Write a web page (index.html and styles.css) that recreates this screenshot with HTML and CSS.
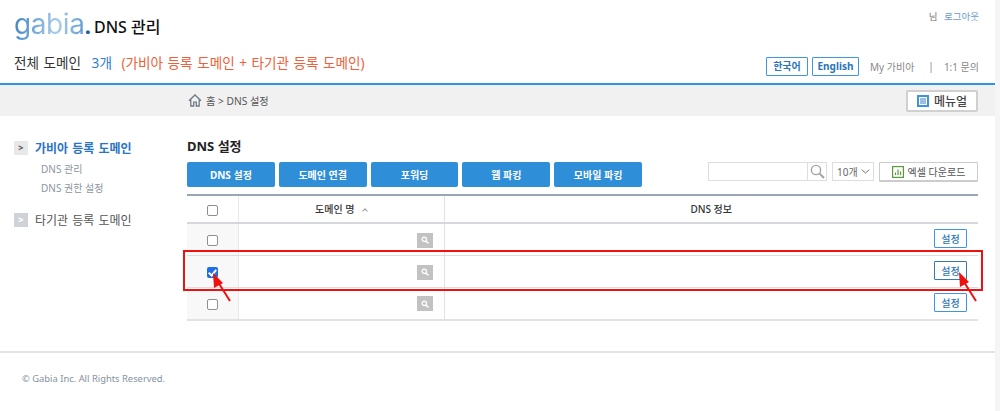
FILE: index.html
```html
<!DOCTYPE html>
<html lang="ko">

<head>
    <meta charset="UTF-8">
    <meta name="viewport" content="width=device-width, initial-scale=1.0">
    <title>DNS 관리</title>
    <link rel="stylesheet" href="styles.css">
</head>

<body>

    <div class="page">
        <header class="header">
            <div class="header-top">
                <div class="brand">
                    <span class="logo">gabia<b>.</b></span>
                    <span class="brand-title">DNS 관리</span>
                </div>
                <div class="user">님 <a href="#">로그아웃</a></div>
            </div>
            <div class="header-bottom">
                <div class="summary">
                    전체 도메인 <span class="count">3개</span>
                    <span class="note">(가비아 등록 도메인 + 타기관 등록 도메인)</span>
                </div>
                <nav class="links">
                    <a class="lang" href="#">한국어</a>
                    <a class="lang" href="#">English</a>
                    <a class="link-my" href="#">My 가비아</a>
                    <span class="link-sep">|</span>
                    <a class="link-ask" href="#">1:1 문의</a>
                </nav>
            </div>
        </header>

        <div class="crumb-bar">
            <div class="crumbs">
                <svg class="home-icon" width="14" height="13" viewBox="0 0 14 13">
                    <path d="M1 6.8 7 1l6 5.8M2.8 5.6V12h2.9V8.2h2.6V12h2.9V5.6" fill="none" stroke="#6f7b86" stroke-width="1.3"/>
                </svg>
                홈 &gt; DNS 설정
            </div>
            <a class="manual" href="#">
                <svg width="12" height="12" viewBox="0 0 12 12">
                    <rect width="12" height="12" fill="#3f94e0"/>
                    <rect x="2" y="2" width="8" height="8" fill="#fff"/>
                    <path d="M3 4h6M3 6h6M3 8h6" stroke="#3f7fc0" stroke-width="1"/>
                </svg>
                메뉴얼
            </a>
        </div>

        <div class="content">
            <aside class="sidebar">
                <div class="side-item active"><span class="arrow">&gt;</span>가비아 등록 도메인</div>
                <a class="side-sub" href="#">DNS 관리</a>
                <a class="side-sub" href="#">DNS 권한 설정</a>
                <div class="side-item other"><span class="arrow">&gt;</span>타기관 등록 도메인</div>
            </aside>

            <main class="main">
                <h1>DNS 설정</h1>
                <div class="toolbar">
                    <div class="tabs">
                        <button class="btn">DNS 설정</button>
                        <button class="btn">도메인 연결</button>
                        <button class="btn">포워딩</button>
                        <button class="btn">웹 파킹</button>
                        <button class="btn">모바일 파킹</button>
                    </div>
                    <div class="tools">
                        <div class="search">
                            <input type="text">
                            <span class="search-btn">
                                <svg width="15" height="15" viewBox="0 0 15 15">
                                    <circle cx="6" cy="6" r="4.6" fill="none" stroke="#a3a3a3" stroke-width="1.4"/>
                                    <path d="M9.4 9.4 14 14" stroke="#a3a3a3" stroke-width="2"/>
                                </svg>
                            </span>
                        </div>
                        <div class="page-size">10개
                            <svg width="9" height="5" viewBox="0 0 9 5">
                                <path d="M.7.7 4.5 4 8.3.7" fill="none" stroke="#777" stroke-width="1"/>
                            </svg>
                        </div>
                        <a class="excel" href="#">
                            <svg width="12" height="12" viewBox="0 0 12 12">
                                <rect x=".6" y=".6" width="10.8" height="10.8" fill="#fff" stroke="#5b9a3c" stroke-width="1.2"/>
                                <path d="M3.5 9V6.5M6 9V3.5M8.5 9V5.5" stroke="#5b9a3c" stroke-width="1.2"/>
                            </svg>
                            엑셀 다운로드
                        </a>
                    </div>
                </div>

                <table class="domains">
                    <thead>
                        <tr>
                            <th class="col-check"><input type="checkbox"></th>
                            <th class="col-name">도메인 명 <span class="sort"></span></th>
                            <th>DNS 정보</th>
                        </tr>
                    </thead>
                    <tbody>
                        <tr>
                            <td class="col-check"><input type="checkbox"></td>
                            <td class="col-name"><span class="zoom-btn"><svg width="8" height="8" viewBox="0 0 8 8"><circle cx="3.3" cy="3.3" r="2.2" fill="none" stroke="#fff" stroke-width="1.3"/><path d="M5 5 7.4 7.4" stroke="#fff" stroke-width="1.5"/></svg></span></td>
                            <td class="col-info"><button class="set-btn">설정</button></td>
                        </tr>
                        <tr>
                            <td class="col-check"><input type="checkbox" checked></td>
                            <td class="col-name"><span class="zoom-btn"><svg width="8" height="8" viewBox="0 0 8 8"><circle cx="3.3" cy="3.3" r="2.2" fill="none" stroke="#fff" stroke-width="1.3"/><path d="M5 5 7.4 7.4" stroke="#fff" stroke-width="1.5"/></svg></span></td>
                            <td class="col-info"><button class="set-btn focus">설정</button></td>
                        </tr>
                        <tr>
                            <td class="col-check"><input type="checkbox"></td>
                            <td class="col-name"><span class="zoom-btn"><svg width="8" height="8" viewBox="0 0 8 8"><circle cx="3.3" cy="3.3" r="2.2" fill="none" stroke="#fff" stroke-width="1.3"/><path d="M5 5 7.4 7.4" stroke="#fff" stroke-width="1.5"/></svg></span></td>
                            <td class="col-info"><button class="set-btn">설정</button></td>
                        </tr>
                    </tbody>
                </table>
            </main>
        </div>

        <footer class="footer">© Gabia Inc. All Rights Reserved.</footer>

        <!-- red marks drawn over the screenshot -->
        <svg class="marks" width="1000" height="411" viewBox="0 0 1000 411">
            <rect x="184" y="251" width="798" height="39" fill="none" stroke="#f01010" stroke-width="2"/>
            <path d="M230 301 218 282" stroke="#f01010" stroke-width="2"/>
            <path d="M213 273 223 283 214 288Z" fill="#f01010"/>
            <path d="M976 301 964 282" stroke="#f01010" stroke-width="2"/>
            <path d="M959 272 969 282 960 287Z" fill="#f01010"/>
        </svg>
    </div>

</body>

</html>
```

FILE: styles.css
```css
* {
    margin: 0;
    padding: 0;
    box-sizing: border-box;
}

html,
body {
    height: 411px;
    overflow: hidden;
}

body {
    font-family: "Noto Sans", "Noto Sans CJK KR", sans-serif;
    background-color: #f5f5f5;
    color: #444;
}

a {
    text-decoration: none;
    color: inherit;
}

.page {
    width: 995px;
    height: 411px;
    background-color: #fff;
}

.header {
    height: 85px;
    padding: 0 16px 0 14px;
    border-bottom: 2px solid #2f94e6;
}

.header-top {
    display: flex;
    justify-content: space-between;
    height: 52px;
}

.brand {
    display: flex;
    align-items: center;
    height: 43px;
    padding-top: 9px;
}

.logo {
    width: 80px;
    font-family: "Inter", sans-serif;
    font-size: 28px;
    font-weight: 400;
    letter-spacing: -0.4px;
    line-height: 36px;
    color: #5f9bd2;
    background: linear-gradient(100deg, #3f82c4, #a9cdea 55%, #3f86c8);
    -webkit-background-clip: text;
    background-clip: text;
    -webkit-text-fill-color: transparent;
}

.logo b {
    color: #1d5fa8;
    -webkit-text-fill-color: #1d5fa8;
    font-size: 18px;
    font-weight: 900;
}

.brand-title {
    font-size: 16px;
    font-weight: 500;
    color: #111;
}

.user {
    margin-top: 9px;
    font-size: 9.5px;
    color: #777;
}

.user a {
    margin-left: 4px;
    color: #6e9ccb;
}

.header-bottom {
    display: flex;
    justify-content: space-between;
    align-items: center;
    height: 24px;
}

.summary {
    padding-bottom: 4px;
    font-size: 13.6px;
    color: #333;
    word-spacing: 1px;
}

.count {
    margin: 0 5px 0 6px;
    color: #2f80d0;
}

.note {
    color: #f0603a;
}

.links {
    display: flex;
    align-items: center;
    padding-top: 4px;
    font-size: 10px;
    color: #888;
}

.lang {
    width: 42px;
    height: 19px;
    margin-right: 4px;
    border: 1.5px solid #3f96e4;
    border-radius: 1px;
    text-align: center;
    line-height: 16px;
    font-weight: 700;
    color: #2a74bc;
}

.lang + .lang {
    width: 47px;
}

.link-my {
    margin-left: 7px;
}

.link-sep {
    margin: 0 10px 0 14px;
}

.crumb-bar {
    display: flex;
    justify-content: space-between;
    align-items: center;
    height: 31px;
    padding: 0 17px 0 188px;
    background-color: #f1f1f1;
}

.crumbs {
    display: flex;
    align-items: center;
    gap: 4px;
    font-size: 10.2px;
    color: #555;
}

.manual {
    display: flex;
    align-items: center;
    justify-content: center;
    gap: 5px;
    width: 72px;
    height: 22px;
    background-color: #fff;
    border: 2px solid #d0d0d0;
    border-radius: 2px;
    font-size: 12px;
    font-weight: 500;
    color: #444;
}

.content {
    display: grid;
    grid-template-columns: 187px 791px;
    height: 235px;
}

.sidebar {
    padding: 24px 0 0 14px;
}

.side-item {
    display: flex;
    align-items: center;
    gap: 7px;
    height: 16px;
    font-size: 12px;
    word-spacing: 1px;
}

.side-item.active {
    color: #2a74c4;
    font-weight: 700;
}

.side-item.other {
    margin-top: 16px;
    color: #555;
}

.arrow {
    width: 14px;
    height: 14px;
    background-color: #e8e8e8;
    color: #666;
    text-align: center;
    font-size: 9px;
    font-weight: 900;
    line-height: 14px;
}

.other .arrow {
    background-color: #cfd3d8;
    color: #fff;
}

.side-sub {
    display: block;
    margin: 3px 0 0 27px;
    height: 16px;
    line-height: 16px;
    font-size: 10px;
    color: #8c96a0;
}

.side-item + .side-sub {
    margin-top: 5px;
}

.main h1 {
    height: 46px;
    padding-top: 21px;
    font-size: 13px;
    font-weight: 700;
    line-height: 18px;
    color: #222;
}

.toolbar {
    display: flex;
    justify-content: space-between;
    align-items: flex-start;
    height: 32px;
}

.tabs {
    display: flex;
    gap: 4px;
}

.btn {
    width: 87.8px;
    height: 25px;
    border: none;
    border-radius: 2px;
    background-color: #2f8ed8;
    color: #fff;
    font-family: inherit;
    font-size: 10px;
    font-weight: 700;
}

.tools {
    display: flex;
    gap: 5px;
}

.search {
    display: flex;
    width: 119px;
    height: 19px;
    border: 1px solid #ddd;
}

.search input {
    width: 99px;
    border: none;
    border-right: 1px solid #ddd;
}

.search-btn {
    display: flex;
    align-items: center;
    justify-content: center;
    flex: 1;
}

.page-size {
    display: flex;
    align-items: center;
    justify-content: space-between;
    width: 42px;
    height: 19px;
    padding: 0 3px 0 4px;
    border: 1px solid #ddd;
    font-size: 10px;
    color: #666;
}

.excel {
    display: flex;
    align-items: center;
    justify-content: center;
    gap: 4px;
    width: 99px;
    height: 20px;
    border: 1px solid #ccc;
    border-bottom-width: 2px;
    border-radius: 1px;
    font-size: 10px;
    color: #555;
}

.domains {
    width: 100%;
    border-collapse: collapse;
    table-layout: fixed;
    border-top: 2px solid #9aa6b2;
    border-bottom: 2px solid #e2e2e2;
}

.domains th {
    height: 28px;
    padding-bottom: 2px;
    border-bottom: 2px solid #d5d8da;
    font-size: 10px;
    font-weight: 500;
    color: #333;
}

.domains td {
    height: 32.2px;
    border-bottom: 1px solid #ddd;
}

.domains tr:last-child td {
    border-bottom: none;
}

.col-check {
    width: 51px;
    text-align: center;
    border-right: 1px solid #e8e8e8;
}

td.col-check {
    background-color: #f8f8f8;
}

.col-name {
    width: 206px;
    border-right: 1px solid #e2e2e2;
}

td.col-name {
    padding-right: 11px;
    text-align: right;
}

.col-info {
    padding-right: 11px;
    text-align: right;
}

.domains input[type="checkbox"] {
    appearance: none;
    display: block;
    width: 11px;
    height: 11px;
    margin: 2px auto 0;
    border: 1px solid #8f8f8f;
    border-radius: 2px;
    background-color: #fff;
}

.domains th input[type="checkbox"] {
    margin-top: 5px;
}

.domains input[type="checkbox"]:checked {
    border: none;
    background: #1f6fe8;
    position: relative;
}

.domains input[type="checkbox"]:checked::after {
    content: "";
    position: absolute;
    left: 3.5px;
    top: 1px;
    width: 3px;
    height: 6px;
    border: solid #fff;
    border-width: 0 2px 2px 0;
    transform: rotate(40deg);
}

.sort {
    display: inline-block;
    width: 4px;
    height: 4px;
    margin-left: 6px;
    border: solid #999;
    border-width: 1px 0 0 1px;
    transform: rotate(45deg);
}

.zoom-btn {
    display: inline-flex;
    align-items: center;
    justify-content: center;
    width: 16px;
    height: 15px;
    margin-bottom: 2px;
    vertical-align: middle;
    background-color: #c2c2c2;
}

.set-btn {
    width: 33px;
    height: 19px;
    margin-bottom: 3px;
    border: 1.5px solid #3f96e4;
    border-radius: 1px;
    background-color: #fff;
    color: #2a74bc;
    font-family: inherit;
    font-size: 10px;
    font-weight: 500;
    vertical-align: middle;
}

.set-btn.focus {
    border-color: #3a78b0;
}

.footer {
    margin-top: 0;
    height: 59px;
    padding: 19px 0 0 22px;
    border-top: 2px solid #e4e4e4;
    font-size: 9.4px;
    color: #8592a0;
}

.marks {
    position: absolute;
    left: 0;
    top: 0;
    pointer-events: none;
}
```
